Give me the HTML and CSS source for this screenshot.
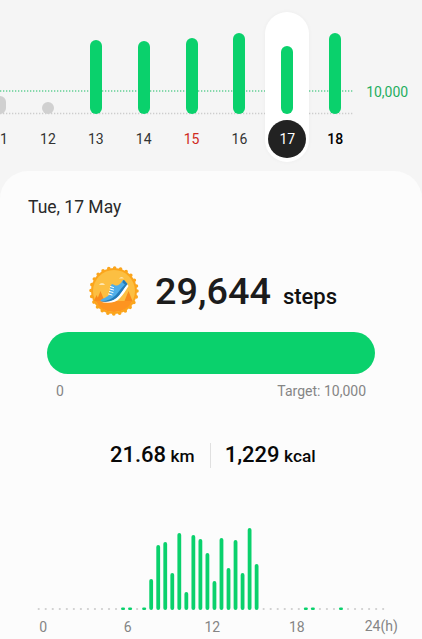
FILE: index.html
```html
<!DOCTYPE html>
<html lang="en">
<head>
    <meta charset="UTF-8">
    <meta name="viewport" content="width=device-width, initial-scale=1.0">
    <title>Steps</title>
    <link rel="stylesheet" href="styles.css">
</head>
<body>

<div class="week">
    <svg class="guides" width="353" height="171">
        <line class="guide-target" x1="0" y1="91" x2="353" y2="91"/>
        <line class="guide-base" x1="0" y1="113.5" x2="353" y2="113.5"/>
    </svg>
    <div class="days">
        <div class="day missed"><span class="bar" style="height: 18px"></span><span class="date">11</span></div>
        <div class="day missed"><span class="bar" style="height: 12px"></span><span class="date">12</span></div>
        <div class="day"><span class="bar" style="height: 74px"></span><span class="date">13</span></div>
        <div class="day"><span class="bar" style="height: 73px"></span><span class="date">14</span></div>
        <div class="day sunday"><span class="bar" style="height: 76px"></span><span class="date">15</span></div>
        <div class="day"><span class="bar" style="height: 81px"></span><span class="date">16</span></div>
        <div class="day selected"><span class="bar" style="height: 68px"></span><span class="date">17</span></div>
        <div class="day today"><span class="bar" style="height: 81px"></span><span class="date">18</span></div>
    </div>
    <div class="goal">10,000</div>
</div>

<div class="card">
    <div class="title">Tue, 17 May</div>

    <div class="steps">
        <svg class="badge" width="50" height="50" viewBox="0 0 50 50">
            <circle cx="25" cy="25" r="23" fill="#fba51c"/>
            <circle cx="25" cy="25" r="23" fill="none" stroke="#fba51c" stroke-width="3.6" stroke-linecap="round" stroke-dasharray="0 6.021"/>
            <circle cx="25" cy="25" r="21" fill="#fcbf42"/>
            <path d="M6.500 35h37a21 21 0 0 1-37 0z" fill="#fd9420"/>
            <path d="M11.500 25l4 10h-8zM7.500 29l3 6H5zM39.500 25l4 10h-8z" fill="#f88a1c"/>
            <path d="M10 19q1-2 3-2t3 2zM30 12.500q1-1.500 2.500-1.500t2.500 1.500z" fill="#fde6b0"/>
            <path d="M11 35.500c8 1 14-1 18-6 3-4 5-7 9-11.500l1.500 2c-3 5-5.500 9-8.500 12-4 5-13 6-20 3.500z" fill="#fff"/>
            <path d="M11 35c1.500-2.500 8-3.500 9.500-7l1-8 1.500-2 3.500 1.500c3 .5 5.500-2 7-5l1.500-.5 3.500 4c-3.500 4-5.500 7.500-8.500 11-4 5-10 7.500-19 6z" fill="#50aee9"/>
            <path d="M11 35c7 .5 12-2 16-6 4-4.500 6-8 10.500-12l1 1c-3.500 4-5.500 8-8.500 11.500-4 4.500-10 7.500-19 5.500zM34 14.500l1-.5 3.500 4-1.500 1.500-3.500-3z" fill="#247bb8"/>
            <path d="M21.500 20.500l3 1M21 23l3.500 1M20.500 25.500l3.500 1M19.500 28l3.500 1" stroke="#fff" stroke-width="1" stroke-linecap="round"/>
        </svg>
        <span class="count">29,644</span>
        <span class="unit">steps</span>
    </div>

    <div class="progress"></div>
    <div class="range">
        <span>0</span>
        <span>Target: 10,000</span>
    </div>

    <div class="totals">
        <div class="total">21.68 <small>km</small></div>
        <div class="total">1,229 <small>kcal</small></div>
    </div>

    <svg class="hours" width="352" height="84" id="hours"></svg>
    <div class="axis">
        <span>0</span>
        <span>6</span>
        <span>12</span>
        <span>18</span>
        <span class="last">24(h)</span>
    </div>
</div>

<script src="chart.js"></script>
</body>
</html>
```
FILE: styles.css
```css
body {
    font-family: Roboto, sans-serif;
    background-color: #f5f5f5;
    margin: 0;
    height: 639px;
    overflow: hidden;
    color: #1c1c1c;
}

.week {
    position: relative;
    display: flex;
    height: 171px;
}

.guides {
    position: absolute;
    left: 0;
    top: 0;
}

.guides line {
    stroke-width: 1.3;
    stroke-dasharray: 1.3 1.7;
}

.guide-target {
    stroke: #62cf94;
}

.guide-base {
    stroke: #cdcdcd;
}

.days {
    position: relative;
    display: flex;
    flex: none;
    margin-left: -24px;
}

.day {
    display: flex;
    flex-direction: column;
    justify-content: flex-end;
    align-items: center;
    box-sizing: border-box;
    width: 44px;
    height: 150px;
    margin: 12px 1.9px 0 2px;
    border-radius: 22px;
    padding-bottom: 4px;
}

.bar {
    width: 12px;
    border-radius: 6px;
    background-color: #0ad16c;
}

.missed .bar {
    background-color: #d0d0d0;
}

.date {
    width: 38px;
    height: 38px;
    margin-top: 6px;
    border-radius: 50%;
    line-height: 38px;
    text-align: center;
    font-size: 14px;
    color: #333;
}

.sunday .date {
    color: #cf2a20;
}

.selected {
    background-color: #fff;
    box-shadow: 0 0 4px rgba(0, 0, 0, 0.04);
}

.selected .date {
    background-color: #222;
    color: #fff;
}

.today .date {
    font-weight: 500;
    color: #000;
}

.goal {
    margin: 83px 0 0 7px;
    font-size: 14px;
    line-height: 18px;
    color: #1fae60;
}

.card {
    display: flex;
    flex-direction: column;
    height: 468px;
    border-radius: 28px 28px 0 0;
    background-color: #fcfcfc;
}

.title {
    margin: 24px 0 0 28px;
    font-size: 17.5px;
    line-height: 24px;
    color: #2a2a2a;
}

.steps {
    display: flex;
    align-items: baseline;
    height: 50px;
    margin: 47px 0 0 89px;
}

.badge {
    align-self: center;
}

.count {
    margin-left: 16px;
    font-size: 37.8px;
    font-weight: 500;
    line-height: 50px;
}

.unit {
    margin-left: 12px;
    font-size: 22px;
    font-weight: 500;
    color: #111;
}

.progress {
    height: 42px;
    margin: 16px 47px 0;
    border-radius: 21px;
    background-color: #0ad16c;
}

.range {
    display: flex;
    justify-content: space-between;
    margin: 8px 56px 0;
    font-size: 14px;
    line-height: 18px;
    color: #858585;
}

.totals {
    display: flex;
    margin: 43px 0 0 110px;
}

.total {
    font-size: 22px;
    line-height: 24px;
    font-weight: 500;
    color: #080808;
}

.total small {
    font-size: 17.3px;
    margin-left: -1px;
}

.total + .total {
    margin-left: 15px;
    padding-left: 14px;
    border-left: 1px solid #e0e0e0;
}

.hours {
    flex: none;
    margin: 58px 0 0 35px;
}

.axis {
    display: flex;
    margin: 8px 0 0 1px;
    font-size: 14px;
    line-height: 18px;
    color: #858585;
}

.axis span {
    flex: none;
    width: 84.5px;
    text-align: center;
}

.axis .last {
    margin-top: -1px;
}
```
FILE: chart.js
```js
// height of each half hour bar, 1 is a few steps only
const values = {
    12: 1, 13: 1, 15: 1, 16: 31, 17: 65, 18: 68, 19: 37, 20: 77, 21: 18,
    22: 75, 23: 71, 24: 57, 25: 29, 26: 72, 27: 42, 28: 70, 29: 37, 30: 82,
    31: 46, 38: 1, 39: 1, 43: 1
};

const chart = document.getElementById('hours');

function addRect(x, y, width, height, color) {
    let rect = document.createElementNS('http://www.w3.org/2000/svg', 'rect');
    rect.setAttribute('x', x - width / 2);
    rect.setAttribute('y', y);
    rect.setAttribute('width', width);
    rect.setAttribute('height', height);
    rect.setAttribute('rx', Math.min(width, height) / 2);
    rect.setAttribute('fill', color);
    chart.appendChild(rect);
}

for (let i = 0; i < 50; i++) {
    let x = 3.7 + i * 7.03;
    let value = values[i];
    if (!value) {
        addRect(x, 82, 2.2, 2, '#cfcfcf');
    } else if (value === 1) {
        addRect(x, 81.6, 4, 2.4, '#0ad16c');
    } else {
        addRect(x, 84 - value, 3.8, value, '#0ad16c');
    }
}
```
